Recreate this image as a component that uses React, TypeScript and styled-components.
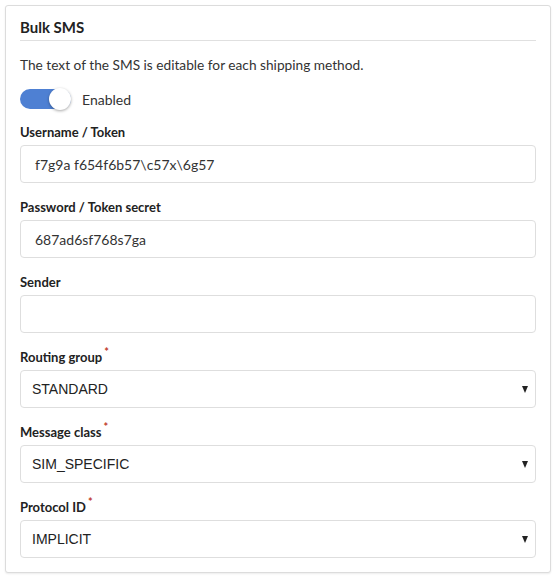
import React from "react";
import styled, { createGlobalStyle } from "styled-components";

const Global = createGlobalStyle`
  html, body { margin: 0; padding: 0; background: #fff; }
  body { font-family: Lato, "Open Sans", sans-serif; color: #333; }
  * { box-sizing: border-box; }
`;

const Page = styled.div`
  padding: 5px 8px 7px 5px;
`;

const Card = styled.section`
  border: 1px solid #dcdcdc;
  border-radius: 3px;
  box-shadow: 0 1px 2px rgba(0, 0, 0, 0.08);
  padding: 9px 14px 14px 14px;
  background: #fff;
`;

const Title = styled.h2`
  margin: 0;
  font-size: 15px;
  font-weight: 700;
  line-height: 25px;
  color: #222;
  border-bottom: 1px solid #e0e0e0;
`;

const Description = styled.p`
  margin: 14px 0 0 0;
  font-size: 13.7px;
  line-height: 20px;
  color: #333;
`;

const ToggleRow = styled.label`
  display: flex;
  align-items: center;
  gap: 11px;
  margin-top: 13px;
  font-size: 14px;
  color: #333;
  height: 22px;
`;

const Track = styled.span<{ $on: boolean }>`
  position: relative;
  width: 51px;
  height: 20px;
  border-radius: 10px;
  background: ${(p) => (p.$on ? "#4e80d3" : "#ccc")};
  flex-shrink: 0;
`;

const Knob = styled.span<{ $on: boolean }>`
  position: absolute;
  top: -1px;
  left: ${(p) => (p.$on ? "29px" : "0")};
  width: 22px;
  height: 22px;
  border-radius: 50%;
  background: #fff;
  box-shadow: 0 1px 3px rgba(0, 0, 0, 0.35);
`;

const Fields = styled.div`
  display: flex;
  flex-direction: column;
  gap: 17px;
  margin-top: 15px;
`;

const Field = styled.div`
  display: flex;
  flex-direction: column;
  gap: 6px;
`;

const Label = styled.div`
  font-size: 13px;
  font-weight: 700;
  line-height: 14px;
  color: #222;
`;

const Req = styled.span`
  color: #c0392b;
  font-size: 11px;
  margin-left: 2px;
  display: inline-block;
  line-height: 0;
  vertical-align: top;
  position: relative;
  top: 2px;
`;

const Input = styled.div`
  height: 38px;
  border: 1px solid #dedede;
  border-radius: 4px;
  padding: 0 14px;
  display: flex;
  align-items: center;
  font-size: 14px;
  color: #333;
  font-family: Lato, sans-serif;
`;

const Select = styled.div`
  height: 38px;
  border: 1px solid #dedede;
  border-radius: 4px;
  padding: 0 7px 0 11px;
  display: flex;
  align-items: center;
  justify-content: space-between;
  font-size: 14px;
  color: #222;
  font-family: "Liberation Sans", Arial, sans-serif;
`;

const Arrow = styled.span`
  width: 0;
  height: 0;
  border-left: 3px solid transparent;
  border-right: 3px solid transparent;
  border-top: 7px solid #222;
`;

const textFields = [
  { label: "Username / Token", value: "f7g9a f654f6b57\\c57x\\6g57" },
  { label: "Password / Token secret", value: "687ad6sf768s7ga" },
  { label: "Sender", value: "" },
];

const selectFields = [
  { label: "Routing group", value: "STANDARD" },
  { label: "Message class", value: "SIM_SPECIFIC" },
  { label: "Protocol ID", value: "IMPLICIT" },
];

export default function App() {
  return (
    <>
      <Global />
      <Page>
        <Card>
          <Title>Bulk SMS</Title>
          <Description>The text of the SMS is editable for each shipping method.</Description>
          <ToggleRow>
            <Track $on>
              <Knob $on />
            </Track>
            Enabled
          </ToggleRow>
          <Fields>
            {textFields.map((f) => (
              <Field key={f.label}>
                <Label>{f.label}</Label>
                <Input>{f.value}</Input>
              </Field>
            ))}
            {selectFields.map((f) => (
              <Field key={f.label}>
                <Label>
                  {f.label}
                  <Req>*</Req>
                </Label>
                <Select>
                  {f.value}
                  <Arrow />
                </Select>
              </Field>
            ))}
          </Fields>
        </Card>
      </Page>
    </>
  );
}
